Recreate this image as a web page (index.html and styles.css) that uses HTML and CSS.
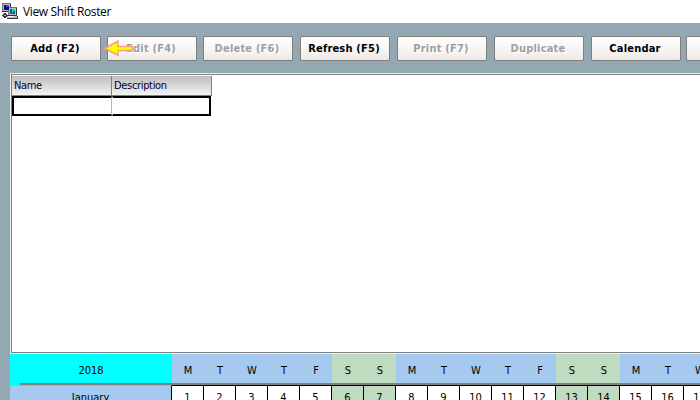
FILE: index.html
```
<!DOCTYPE html>
<html lang="en">
<head>
<meta charset="utf-8">
<title>View Shift Roster</title>
<link rel="stylesheet" href="styles.css">
</head>
<body>
<header class="titlebar">
  <svg class="app-icon" width="16" height="16" viewBox="0 0 16 16" shape-rendering="crispEdges">
    <path fill="#b8bcc0" d="M0 1h8v7H0zM6 5h9v8H6zM5 13h11v3H5z"/>
    <path fill="#30363a" d="M8 1h1v4H8zM0 8h6v1H0zM6 12h9v1H6zM14 5h1v8h-1zM5 15h11v1H5zM15 13h1v2h-1z"/>
    <path fill="#70767a" d="M0 0h9v1H0zM0 1h1v7H0zM6 4h9v1H6zM6 5h1v7H6z"/>
    <path fill="#0a0a8c" d="M2 2h5v5H2z"/>
    <path fill="#3c4ce0" d="M4 2h3v2H4z"/>
    <path fill="#08607c" d="M8 6h5v5H8z"/>
    <path fill="#20d4cc" d="M10 6h3v2h-2v2h-1z"/>
    <path fill="#333" d="M2 10h2v5H2zM0 12h6v1H0zM1 11h1v3H1zM4 11h1v3H4z"/>
    <path fill="#d8c838" d="M2 12h2v1H2z"/>
    <path fill="#fff" d="M6 13h6v1H6z"/>
  </svg>
  <span class="title">View Shift Roster</span>
</header>
<main class="window">
  <nav class="toolbar">
    <button class="btn"><span>Add (F2)</span></button>
    <button class="btn off"><span>Edit (F4)</span></button>
    <button class="btn off"><span>Delete (F6)</span></button>
    <button class="btn wide"><span>Refresh (F5)</span></button>
    <button class="btn off wide"><span>Print (F7)</span></button>
    <button class="btn off wide"><span>Duplicate</span></button>
    <button class="btn wide"><span>Calendar</span></button>
    <button class="btn last"></button>
  </nav>
  <svg class="pointer" width="32" height="20" viewBox="0 0 32 20">
    <path d="M2 10.500L15 3V8.500H29.500V12.500H15V17.500Z" fill="#ff0" stroke="#f8a080" stroke-width="1.500"/>
  </svg>
  <section class="panel">
    <div class="grid">
      <div class="head">Name</div><div class="head">Description</div>
      <div class="cell"></div><div class="cell second"></div>
    </div>
  </section>
  <section class="calendar">
    <div class="row days">
      <div class="label year">2018</div>
      <div>M</div><div>T</div><div>W</div><div>T</div><div>F</div><div class="we">S</div><div class="we">S</div>
      <div>M</div><div>T</div><div>W</div><div>T</div><div>F</div><div class="we">S</div><div class="we">S</div>
      <div>M</div><div>T</div><div>W</div>
    </div>
    <div class="rule"></div>
    <div class="row dates">
      <div class="label month">January</div>
      <div>1</div><div>2</div><div>3</div><div>4</div><div>5</div><div class="we">6</div><div class="we">7</div>
      <div>8</div><div>9</div><div>10</div><div>11</div><div>12</div><div class="we">13</div><div class="we">14</div>
      <div>15</div><div>16</div><div>17</div>
    </div>
  </section>
</main>
</body>
</html>
```
FILE: styles.css
```
* { box-sizing: border-box; }
body {
  margin: 0;
  width: 700px;
  height: 400px;
  overflow: hidden;
  background: #93a8b2;
  color: #000;
  font-family: "DejaVu Sans Condensed", "DejaVu Sans", sans-serif;
  font-size: 11px;
}
.titlebar {
  display: flex;
  height: 23px;
  padding: 3px 0 0 2px;
  background: #fff;
}
.app-icon { flex: none; }
.title {
  margin-left: 5px;
  font: 12px/18px "Open Sans", sans-serif;
  letter-spacing: -0.35px;
  white-space: nowrap;
}
.window { position: relative; height: 377px; overflow: hidden; }
.toolbar {
  display: flex;
  gap: 6px;
  height: 50px;
  padding: 13px 0 0 11px;
}
.btn {
  flex: none;
  width: 90px;
  height: 25px;
  padding: 0 2px 0 0;
  border: 1px solid #807d7b;
  border-radius: 2px;
  background: linear-gradient(#fff, #f8f6f4 50%, #edeae7);
  color: #000;
  font: bold 11px/21px "DejaVu Sans Condensed", "DejaVu Sans", sans-serif;
  letter-spacing: 0.2px;
  white-space: nowrap;
}
.btn.wide { margin-left: 1px; }
.btn.last { margin-left: -1px; }
.btn.off { color: #a09f9e; text-shadow: 1px 1px #fff; }
.pointer { position: absolute; left: 103px; top: 15px; }
.panel {
  height: 281px;
  margin-left: 10px;
  border: solid #f0f0f0;
  border-width: 1px 0 1px 1px;
  background: #fff;
}
.grid {
  display: grid;
  grid-template-columns: 100px 100px;
  grid-template-rows: 20px 20px;
  height: 279px;
  padding-top: 1px;
  border: solid #808080;
  border-width: 1px 0 1px 1px;
  align-content: start;
}
.head {
  padding-left: 2px;
  border-right: 1px solid #808080;
  border-bottom: 1px solid #808080;
  background: linear-gradient(#bebebe, #d8d8d8 50%, #f4f4f4);
  color: #000030;
  line-height: 20px;
  letter-spacing: -0.33px;
}
.cell {
  border: 2px solid #000;
  border-right: 1px solid #b8b8b8;
}
.cell.second { border-left: 1px solid #fff; border-right: 2px solid #000; width: 99px; }
.calendar { margin-left: 10px; }
.row { display: flex; width: 710px; }
.row > div {
  flex: none;
  width: 32px;
  text-align: center;
  background: #a6c9f0;
}
.row > .label { width: 162px; }
.row > .we { background: #c0dcc0; }
.days { height: 29px; line-height: 33px; }
.row > .year { background: #0ff; }
.rule {
  height: 2px;
  border-left: 10px solid #0ff;
  background: #808080;
}
.dates { height: 30px; line-height: 24px; }
.dates > div {
  background: #fff;
  border-top: 1px solid #000;
  border-right: 1px solid #000;
}
.dates > .we { background: #c0dcc0; }
.dates > .month {
  background: #a6c9f0;
  border-top: 1px solid #0ff;
}
```
